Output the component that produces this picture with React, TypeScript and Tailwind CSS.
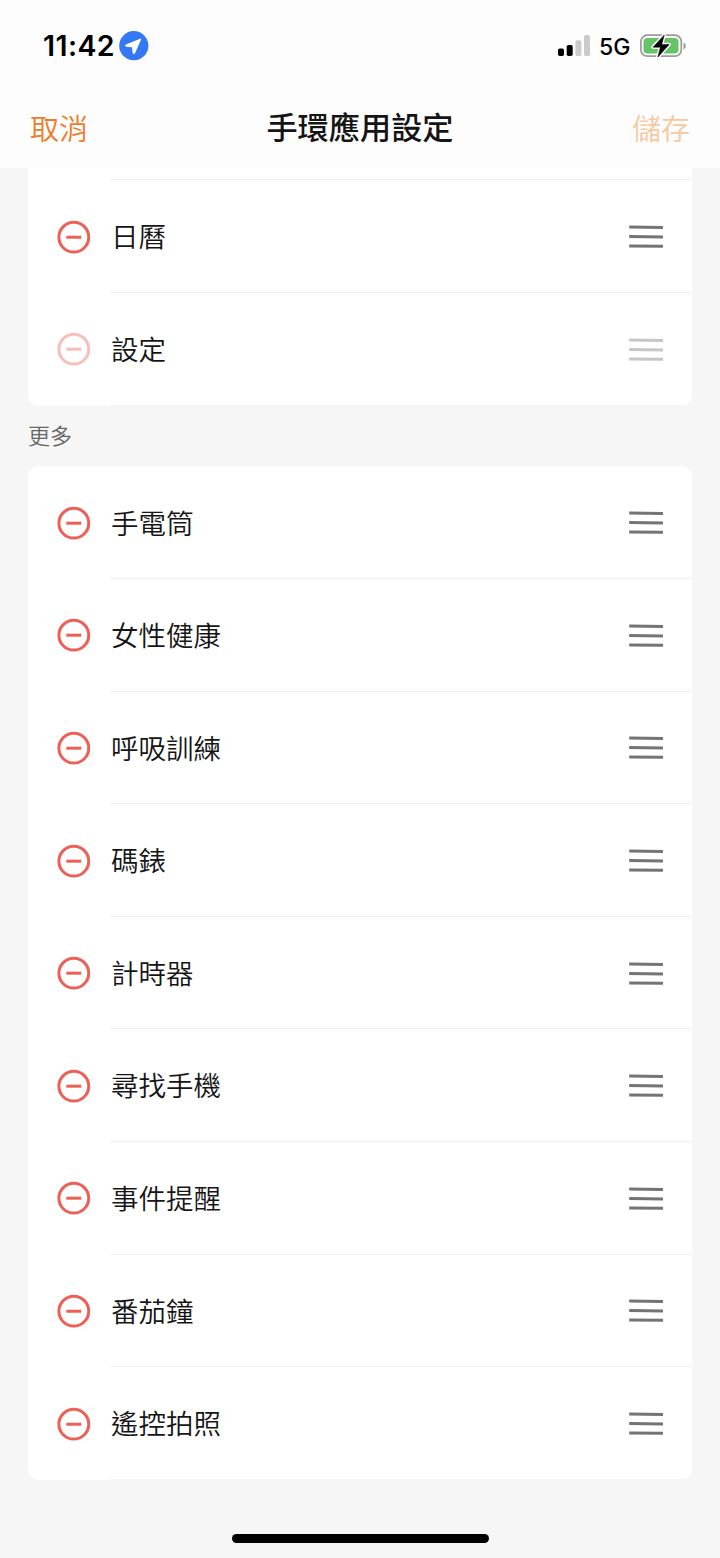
import React from 'react';

interface AppItem {
  id: string;
  name: string;
  disabled?: boolean;
}

const activeApps: AppItem[] = [
  { id: 'calendar', name: '日曆' },
  { id: 'settings', name: '設定', disabled: true },
];

const moreApps: AppItem[] = [
  { id: 'flashlight', name: '手電筒' },
  { id: 'cycles', name: '女性健康' },
  { id: 'breathing', name: '呼吸訓練' },
  { id: 'stopwatch', name: '碼錶' },
  { id: 'timer', name: '計時器' },
  { id: 'find-phone', name: '尋找手機' },
  { id: 'events', name: '事件提醒' },
  { id: 'pomodoro', name: '番茄鐘' },
  { id: 'camera', name: '遙控拍照' },
];

const RemoveIcon: React.FC = () => (
  <svg width="34" height="34" viewBox="0 0 34 34" fill="none" stroke="#ee6055">
    <circle cx="16.8" cy="17.2" r="14.9" strokeWidth="3" />
    <path d="M9.3 17.2h15" strokeWidth="3" />
  </svg>
);

const DragIcon: React.FC = () => (
  <svg width="34" height="26" viewBox="0 0 34 26" fill="none" stroke="#747474" strokeWidth="3">
    <path d="M.2 4.1l34 .3M.2 13.6l34 .3M.2 23l34 .3" />
  </svg>
);

const AppRow: React.FC<{ item: AppItem }> = ({ item }) => (
  <li className="group flex h-[112.6px] pl-[29px]">
    <button className={`flex w-[53px] items-center ${item.disabled ? 'opacity-40' : ''}`}>
      <RemoveIcon />
    </button>
    <div className="flex flex-1 items-center justify-between border-b-[1.6px] border-[#f0f0f0] pr-[29px] pl-px group-last:border-[#f6f6f6]">
      <span className="text-[27.5px] leading-none font-[350]">{item.name}</span>
      <span className={item.disabled ? 'opacity-40' : ''}>
        <DragIcon />
      </span>
    </div>
  </li>
);

const StatusBar: React.FC = () => (
  <div className="flex h-[92px] items-center justify-between pr-[33px] pl-[43px] font-['Inter'] text-black">
    <div className="flex items-center gap-1">
      <span className="text-[28.5px] font-semibold tracking-[0.4px]">11:42</span>
      <svg width="30" height="30" viewBox="0 0 30 30">
        <circle cx="14.8" cy="14.7" r="14.6" fill="#3478f6" />
        <path d="M21.8 8L6.8 14q-1 .8 .4 1.3l6.4 .6 .5 6.2q.6 1.3 1.4 .2Z" fill="#fff" stroke="#fff" strokeLinejoin="round" />
      </svg>
    </div>
    <div className="flex items-center">
      <svg width="32" height="22" viewBox="0 0 32 22">
        <rect x="0" y="13.5" width="6" height="7.5" rx="1.7" />
        <rect x="8.7" y="10" width="6" height="11" rx="1.7" />
        <rect x="17.4" y="5.2" width="6" height="15.8" rx="1.7" fill="#cbcbcb" />
        <rect x="26" y="0" width="6" height="21" rx="1.7" fill="#cbcbcb" />
      </svg>
      <span className="ml-[9px] w-[31px] pt-[2px] text-[23px] font-[450]">5G</span>
      <svg className="ml-[10px]" width="47" height="26" viewBox="0 0 47 26">
        <rect x="0.9" y="2.2" width="40.4" height="21" rx="6.5" fill="none" stroke="#9b9b9b" strokeWidth="1.7" />
        <path d="M43.5 9.5v7q2.3-.8 2.3-3.5t-2.3-3.5Z" fill="#9b9b9b" />
        <rect x="3.5" y="5" width="35" height="15.6" rx="4" fill="#65c466" />
        <path d="M24.3 2L13 14.2h7.4L17.8 24.2 29.2 11.4h-7.5Z" fill="#fefefe" stroke="#fefefe" strokeWidth="3.4" strokeLinejoin="round" />
        <path d="M24.3 2L13 14.2h7.4L17.8 24.2 29.2 11.4h-7.5Z" stroke="#000" strokeWidth="0.5" strokeLinejoin="round" />
      </svg>
    </div>
  </div>
);

const App: React.FC = () => {
  return (
    <div className="flex h-[1558px] w-[720px] flex-col overflow-hidden bg-[#f6f6f6] font-['Noto_Sans_CJK_TC',sans-serif] text-[#151515]">
      <header className="h-[168px] shrink-0 bg-[#fdfdfd]">
        <StatusBar />
        <nav className="grid h-[70px] grid-cols-3 items-center px-[30px]">
          <button className="text-left text-[29px] leading-none font-[350] text-[#ee7d2b]">取消</button>
          <h1 className="pb-[2px] text-center text-[31.2px] leading-none font-medium whitespace-nowrap">手環應用設定</h1>
          <button className="text-right text-[29px] leading-none font-[350] text-[#f7c9a0]">儲存</button>
        </nav>
      </header>

      <main className="flex flex-1 flex-col px-7">
        {/* tail of the row scrolled under the header */}
        <div className="h-[12.4px] shrink-0 bg-white pl-[82px]">
          <div className="h-full border-b-[1.6px] border-[#f0f0f0]" />
        </div>
        <ul className="overflow-hidden rounded-b-[10px] bg-white">
          {activeApps.map((item) => (
            <AppRow key={item.id} item={item} />
          ))}
        </ul>
        <h2 className="flex h-[60.9px] items-center pb-[5px] text-[22px] leading-none font-[350] text-[#666]">更多</h2>
        <ul className="overflow-hidden rounded-[10px] bg-white">
          {moreApps.map((item) => (
            <AppRow key={item.id} item={item} />
          ))}
        </ul>
      </main>

      <div className="mx-auto mb-[15px] h-[9px] w-[257px] shrink-0 rounded-full bg-black" />
    </div>
  );
};

export default App;
